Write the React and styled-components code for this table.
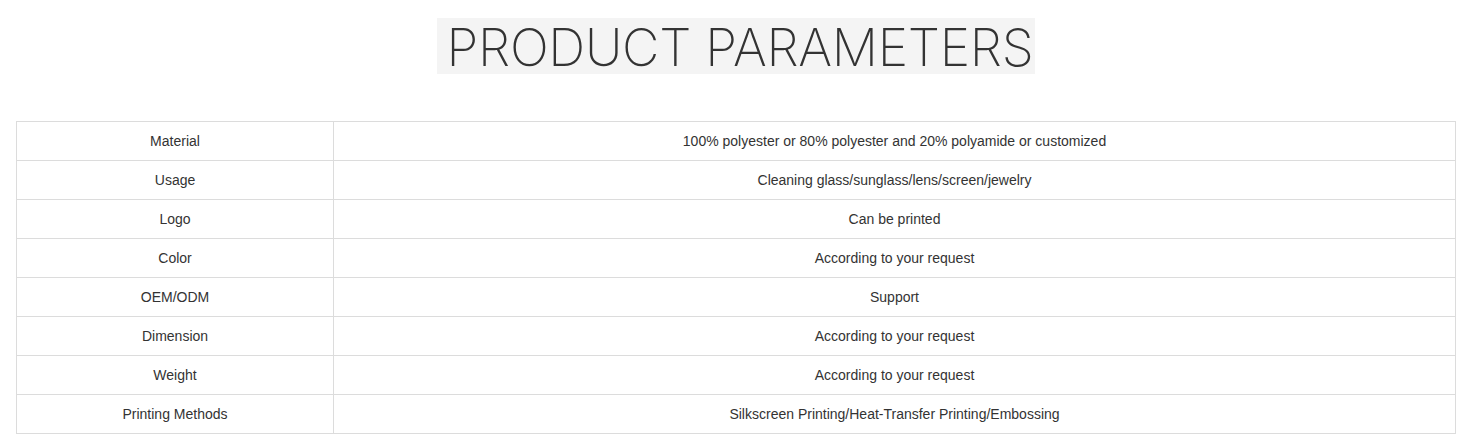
import React from 'react'
import styled, { createGlobalStyle } from 'styled-components'

const Global = createGlobalStyle`
    body {
        margin: 0;
        background: #fff;
        font-family: "Liberation Sans", Arial, sans-serif;
    }
`

const rows = [
    ['Material', '100% polyester or 80% polyester and 20% polyamide or customized'],
    ['Usage', 'Cleaning glass/sunglass/lens/screen/jewelry'],
    ['Logo', 'Can be printed'],
    ['Color', 'According to your request'],
    ['OEM/ODM', 'Support'],
    ['Dimension', 'According to your request'],
    ['Weight', 'According to your request'],
    ['Printing Methods', 'Silkscreen Printing/Heat-Transfer Printing/Embossing'],
]

function App() {
    return (
        <Page>
            <Global />
            <Heading>
                <Title>PRODUCT PARAMETERS</Title>
            </Heading>
            <Table>
                <tbody>
                    {rows.map(([name, value]) => (
                        <tr key={name}>
                            <Cell $name>{name}</Cell>
                            <Cell>{value}</Cell>
                        </tr>
                    ))}
                </tbody>
            </Table>
        </Page>
    )
}

const Page = styled.div`
    padding: 18px 13px 8px 16px;
`

const Heading = styled.div`
    display: flex;
    justify-content: center;
    margin-bottom: 47px;
`

const Title = styled.h2`
    margin: 0;
    height: 56px;
    padding: 0 2px 0 10px;
    background: #f4f4f4;
    color: #333;
    font-family: Inter, "Liberation Sans", sans-serif;
    font-weight: 200;
    font-size: 51.5px;
    line-height: 58px;
    letter-spacing: -0.3px;
`

const Table = styled.table`
    width: 1440px;
    border-collapse: collapse;
    font-size: 14px;
    color: #333;
    td {
        border: 1px solid #dcdcdc;
    }
`

const Cell = styled.td`
    height: 38px;
    padding: 0;
    text-align: center;
    width: ${p => (p.$name ? '316px' : 'auto')};
`

export default App
